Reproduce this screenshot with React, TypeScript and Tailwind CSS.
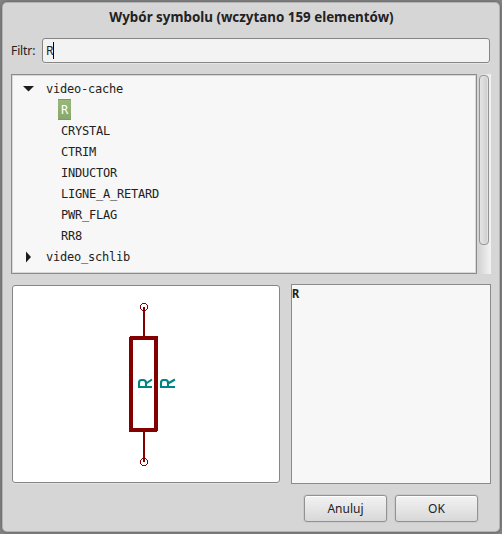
import React from 'react';

const symbols = ['R', 'CRYSTAL', 'CTRIM', 'INDUCTOR', 'LIGNE_A_RETARD', 'PWR_FLAG', 'RR8'];

function Library({ name, open = false }: { name: string; open?: boolean }) {
  return (
    <div className="flex h-[21px] items-center pl-[10px]">
      <svg width="12" height="12" viewBox="0 0 12 12" className="mr-[12px] shrink-0" fill="#1c1c1c">
        {open ? <path d="M1 3h11L6.5 8.5z" /> : <path d="M4 0.5v11L9 6z" />}
      </svg>
      <span>{name}</span>
    </div>
  );
}

function SymbolTree() {
  return (
    <div className="h-[200px] w-[466px] border border-[#8b8b8b] bg-[#f7f7f7] pt-[3px] font-['DejaVu_Sans_Mono',monospace] text-[12px] tracking-[-0.224px] whitespace-nowrap shadow-[inset_0_0_0_1px_#d8d8d8]">
      <Library name="video-cache" open />
      {symbols.map((name, i) => (
        <div key={name} className="flex h-[21px] items-center pl-[46px]">
          {i === 0 ? (
            <span className="flex h-[21px] w-[13px] items-center border-y border-[#80986a] bg-linear-to-b from-[#98b77b] to-[#88a76b] pl-[3px] text-white">
              {name}
            </span>
          ) : (
            <span className="pl-[3px]">{name}</span>
          )}
        </div>
      ))}
      <Library name="video_schlib" />
    </div>
  );
}

function Scrollbar() {
  return (
    <div className="ml-px h-[200px] w-[13px] bg-linear-to-r from-[#d2d2d2] to-[#f4f4f4] pt-[1px] pl-[1px]">
      <div className="h-[170px] w-[10px] rounded-[4px] border border-[#949494] bg-linear-to-r from-[#e5e5e5] to-[#cdcdcd] shadow-[inset_0_0_0_1px_#e2e2e2]" />
    </div>
  );
}

function Preview() {
  return (
    <div className="mt-px h-[198px] w-[268px] rounded-[3px] border border-[#858585] bg-white shadow-[0_1px_0_#e3e3e3]">
      <svg width="266" height="196" viewBox="13 286 266 196">
        <g fill="none" stroke="#840000" shapeRendering="crispEdges">
          <rect x="131" y="338" width="25" height="92" strokeWidth="4" strokeLinejoin="round" />
          <path d="M144 307v30M144 432v30" strokeWidth="2" />
          <circle cx="144" cy="307" r="3.7" strokeWidth="1" />
          <circle cx="144" cy="462" r="3.7" strokeWidth="1" />
        </g>
        <g fill="none" stroke="#008484" strokeWidth="2.1">
          <path d="M152 387H139v-4q0-3 2.500-3h1.500q3 0 3 3v4M146 383.500l6-4" />
          <path d="M175 387H161v-4q0-3 2.500-3h2q2.500 0 2.500 3v4M168 383.500l7-4" />
        </g>
      </svg>
    </div>
  );
}

function Button({ children }: { children: React.ReactNode }) {
  return (
    <button className="h-[27px] w-[83px] rounded-[3px] border border-[#929292] bg-linear-to-b from-[#f3f3f3] to-[#d8d8d8] pt-px text-center shadow-[inset_0_1px_0_#fff,0_0_0_1px_#cbcbcb]">
      {children}
    </button>
  );
}

export default function App() {
  return (
    <div className="h-[534px] w-[502px] overflow-hidden bg-[#858585] pt-[3px] pl-[3px] font-['Noto_Sans',sans-serif] text-[12px] text-[#222]">
      <main className="h-[528px] w-[496px] rounded-[4px] bg-[#d6d6d6] pl-[8px] shadow-[0_0_0_1px_#b4b4b4,0_0_5px_#444]">
        <h1 className="h-[35px] pt-[4px] pr-[7px] text-center text-[13.36px] leading-[20px] font-bold">
          Wybór symbolu (wczytano 159 elementów)
        </h1>
        <div className="flex h-[25px] items-center">
          <label className="w-[31px] tracking-[-0.1px]">Filtr:</label>
          <div className="flex h-[25px] w-[448px] items-center rounded-[3px] border border-[#858585] bg-[#f3f3f3] pl-[3px] shadow-[0_1px_0_#e6e6e6]">
            <span className="w-[7px]">R</span>
            <span className="h-[17px] w-px bg-black" />
          </div>
        </div>
        <div className="mt-[11px] flex">
          <SymbolTree />
          <Scrollbar />
        </div>
        <div className="mt-[10px] flex pl-px">
          <Preview />
          <div className="ml-[11px] h-[200px] w-[200px] border border-[#8b8b8b] bg-[#f7f7f7] font-['DejaVu_Sans_Mono',monospace] text-[12px] leading-[18px] font-bold">
            R
          </div>
        </div>
        <div className="mt-[11px] flex gap-[8px] pl-[293px]">
          <Button>Anuluj</Button>
          <Button>OK</Button>
        </div>
      </main>
    </div>
  );
}
